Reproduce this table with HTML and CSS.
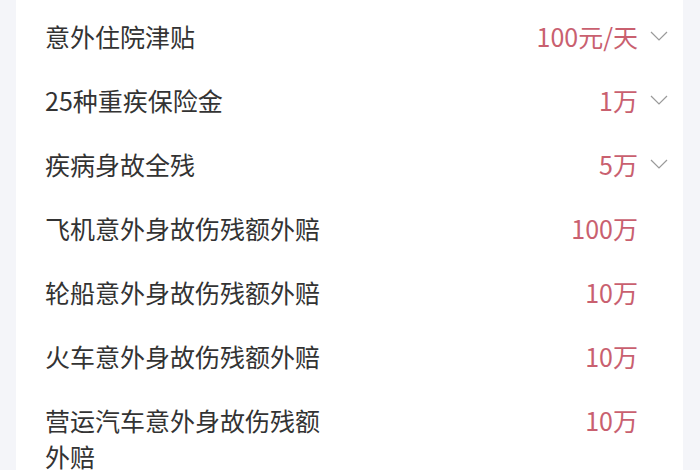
FILE: index.html
```html
<!DOCTYPE html>
<html lang="zh-CN">
<head>
<meta charset="utf-8">
<link rel="stylesheet" href="styles.css">
</head>
<body>
<div class="page">
  <div class="card">
    <div class="row"><div class="name">意外住院津贴</div><div class="val">100元/天</div><div class="arrow"><svg viewBox="0 0 18 10" width="18" height="10"><path d="M1 1 L9 9 L17 1" fill="none" stroke="#9a9a9a" stroke-width="1.2"/></svg></div></div>
    <div class="row"><div class="name">25种重疾保险金</div><div class="val">1万</div><div class="arrow"><svg viewBox="0 0 18 10" width="18" height="10"><path d="M1 1 L9 9 L17 1" fill="none" stroke="#9a9a9a" stroke-width="1.2"/></svg></div></div>
    <div class="row"><div class="name">疾病身故全残</div><div class="val">5万</div><div class="arrow"><svg viewBox="0 0 18 10" width="18" height="10"><path d="M1 1 L9 9 L17 1" fill="none" stroke="#9a9a9a" stroke-width="1.2"/></svg></div></div>
    <div class="row"><div class="name">飞机意外身故伤残额外赔</div><div class="val">100万</div><div class="arrow"></div></div>
    <div class="row"><div class="name">轮船意外身故伤残额外赔</div><div class="val">10万</div><div class="arrow"></div></div>
    <div class="row"><div class="name">火车意外身故伤残额外赔</div><div class="val">10万</div><div class="arrow"></div></div>
    <div class="row"><div class="name">营运汽车意外身故伤残额外赔</div><div class="val">10万</div><div class="arrow"></div></div>
  </div>
</div>
</body>
</html>
```
FILE: styles.css
```css
html, body {
  margin: 0;
  padding: 0;
  background: #f4f5f9;
}
.page {
  width: 700px;
  height: 470px;
  overflow: hidden;
  padding: 0 17px 0 16px;
  box-sizing: border-box;
}
.card {
  background: #ffffff;
  height: 100%;
  padding: 4px 15px 0 29px;
  box-sizing: border-box;
  font-family: "Noto Sans CJK SC", "Noto Sans", sans-serif;
}
.row {
  display: flex;
  align-items: flex-start;
  padding: 14px 0;
}
.name {
  width: 292px;
  font-size: 25px;
  line-height: 36px;
  color: #333333;
}
.val {
  flex: 1;
  text-align: right;
  font-size: 25px;
  line-height: 36px;
  color: #c9606f;
}
.arrow {
  width: 30px;
  height: 36px;
  display: flex;
  align-items: center;
  justify-content: flex-end;
}
.arrow svg {
  display: block;
}
```
